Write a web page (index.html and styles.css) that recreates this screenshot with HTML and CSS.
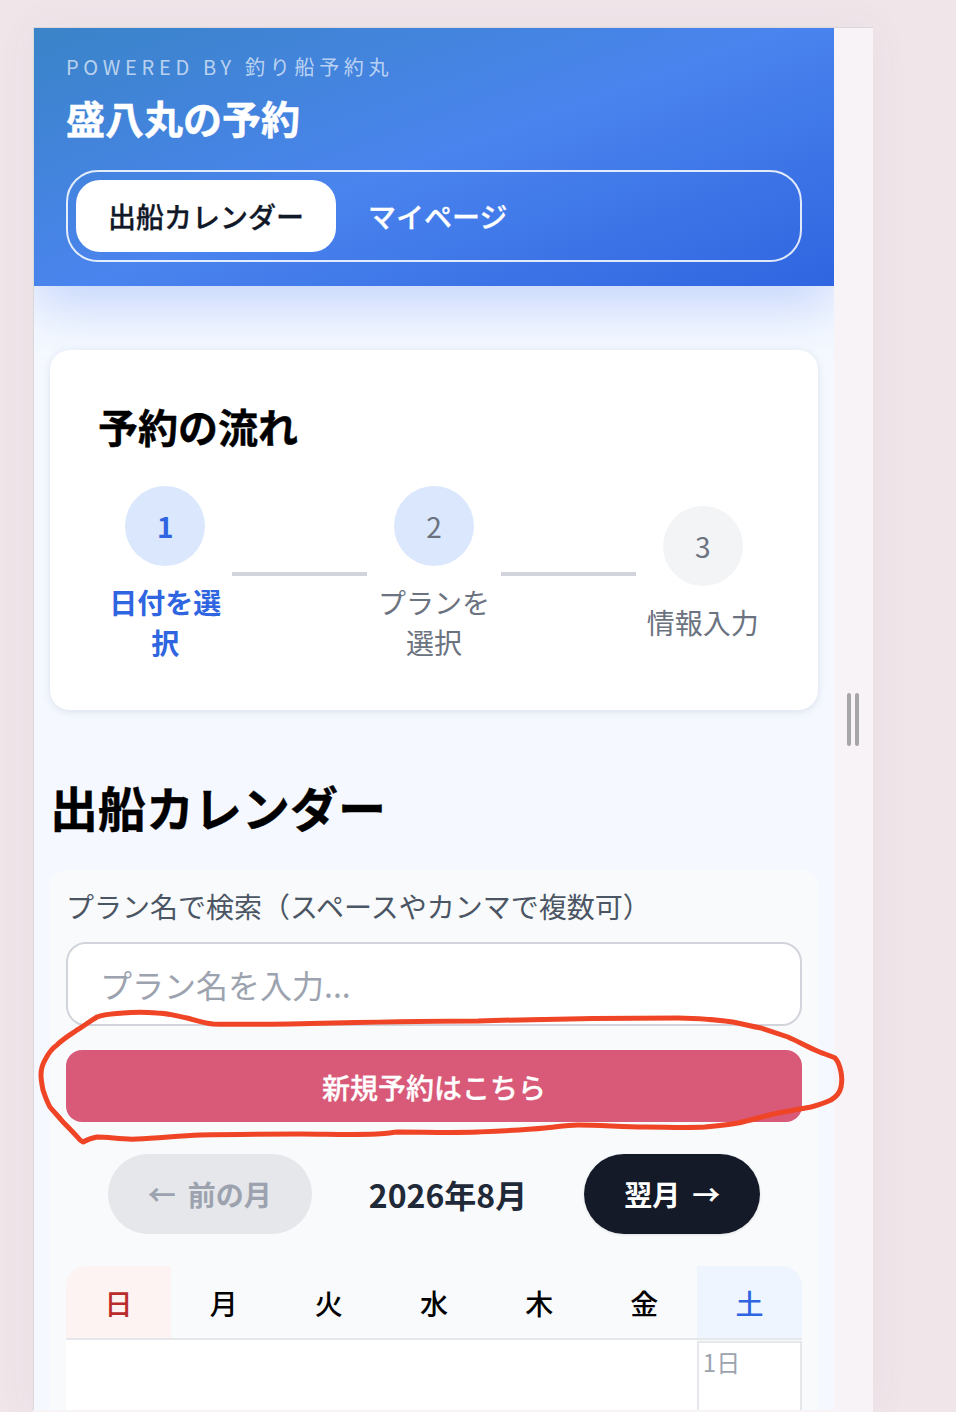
FILE: index.html
```html
<!DOCTYPE html>
<html lang="ja">
<head>
<meta charset="utf-8">
<title>盛八丸の予約</title>
<link rel="stylesheet" href="styles.css">
</head>
<body>
<div class="window">
  <div class="main">
    <header class="header">
      <p class="powered">POWERED BY 釣り船予約丸</p>
      <h1 class="title">盛八丸の予約</h1>
      <nav class="tabs">
        <a class="tab tab-active">出船カレンダー</a>
        <a class="tab">マイページ</a>
      </nav>
    </header>
    <div class="content">
      <section class="card">
        <h2 class="card-title">予約の流れ</h2>
        <div class="steps">
          <div class="step step-current"><div class="step-num">1</div><div class="step-label">日付を選択</div></div>
          <div class="step-line"></div>
          <div class="step step-mid"><div class="step-num">2</div><div class="step-label">プランを選択</div></div>
          <div class="step-line"></div>
          <div class="step step-last"><div class="step-num">3</div><div class="step-label">情報入力</div></div>
        </div>
      </section>
      <h2 class="section-title">出船カレンダー</h2>
      <section class="panel">
        <label class="search-label">プラン名で検索（スペースやカンマで複数可）</label>
        <div class="search-input">プラン名を入力...</div>
        <button class="new-btn">新規予約はこちら</button>
        <div class="month-nav">
          <button class="month-btn month-prev"><span class="arrow">←</span>前の月</button>
          <div class="month-title">2026年8月</div>
          <button class="month-btn month-next">翌月<span class="arrow arrow-next">→</span></button>
        </div>
        <div class="calendar">
          <div class="dow dow-sun">日</div>
          <div class="dow">月</div>
          <div class="dow">火</div>
          <div class="dow">水</div>
          <div class="dow">木</div>
          <div class="dow">金</div>
          <div class="dow dow-sat">土</div>
          <div class="cell-empty"></div>
          <div class="cell-empty"></div>
          <div class="cell-empty"></div>
          <div class="cell-empty"></div>
          <div class="cell-empty"></div>
          <div class="cell-empty"></div>
          <div class="cell">1日</div>
        </div>
      </section>
    </div>
  </div>
  <div class="strip"><div class="handle"></div><div class="handle"></div></div>
</div>
<svg class="scribble" viewBox="0 0 956 1412" width="956" height="1412" aria-hidden="true">
  <path d="M213 1024C203 1023 195 1020 187 1018C177 1016 167 1013 157 1013C145 1012 134 1012 123 1013C113 1014 105 1014 97 1017C90 1021 84 1026 77 1030C70 1035 63 1039 57 1045C51 1049 48 1054 45 1060C42 1065 41 1070 41 1075C41 1080 42 1085 43 1090C45 1096 47 1102 50 1107C54 1112 59 1117 63 1122C69 1128 75 1134 80 1140L83 1142C88 1139 92 1138 97 1137C110 1137 123 1140 137 1139C158 1138 179 1136 200 1135C233 1134 267 1134 300 1134C326 1134 351 1135 377 1134C384 1134 390 1133 397 1132C424 1132 451 1133 478 1132C500 1131 523 1130 545 1128C556 1127 567 1125 578 1125C600 1125 623 1127 645 1127C665 1127 685 1128 705 1127C716 1126 727 1125 738 1123C751 1120 765 1116 778 1113C789 1111 800 1109 811 1107C818 1105 825 1103 831 1100C836 1097 840 1092 841 1087C842 1082 842 1077 841 1072C840 1067 839 1062 835 1058C829 1055 821 1053 815 1050C806 1046 797 1041 788 1037C779 1034 770 1031 761 1028C749 1026 737 1022 725 1021C709 1019 694 1018 678 1018C611 1018 545 1019 478 1021C430 1021 381 1022 333 1023C293 1024 253 1025 213 1024Z"/>
</svg>
</body>
</html>
```
FILE: styles.css
```css
* { box-sizing: border-box; }
html, body { margin: 0; height: 1412px; overflow: hidden; }
body {
  position: relative;
  background: #f0e6ea;
  padding: 27px 0 0 33px;
  font-family: "Noto Sans CJK JP", "Noto Sans", sans-serif;
}
p, h1, h2 { margin: 0; }
button { font-family: inherit; border: 0; cursor: pointer; }

.window {
  display: flex;
  width: 840px;
  height: 1385px;
  background: #f7f3f7;
  border-top: 1px solid #dcd8da;
  box-shadow: 0 0 40px rgba(90, 60, 70, 0.05);
}
.main {
  width: 801px;
  height: 1382px;
  overflow: hidden;
  background: #f5f9ff;
  border-left: 1px solid #d8d8da;
}
.strip {
  width: 39px;
  height: 1385px;
  display: flex;
  justify-content: center;
  align-items: flex-start;
  gap: 4px;
  padding: 665px 1px 0 0;
}
.handle { width: 4px; height: 53px; border-radius: 2px; background: #a6a6a6; }

.header {
  position: relative;
  height: 258px;
  padding: 25px 32px 0;
  background: linear-gradient(160deg, #3a84c8 0%, #4a84ee 50%, #2f65e0 100%);
  box-shadow: 0 20px 50px rgba(59, 110, 240, 0.26);
}
.powered {
  font-size: 20px;
  line-height: 28px;
  letter-spacing: 4.7px;
  color: rgba(255, 255, 255, 0.65);
}
.title {
  font-size: 39px;
  line-height: 58px;
  margin-top: 7px;
  font-weight: 700;
  color: #fff;
  -webkit-text-stroke: 0.5px #fff;
}
.tabs {
  display: flex;
  margin-top: 24px;
  height: 92px;
  padding: 8px;
  border: 2px solid rgba(255, 255, 255, 0.85);
  border-radius: 32px;
}
.tab {
  display: flex;
  align-items: center;
  height: 72px;
  padding: 0 32px;
  border-radius: 24px;
  font-size: 28px;
  font-weight: 500;
  color: #fff;
  -webkit-text-stroke: 0.3px currentColor;
}
.tab-active { background: #fff; color: #111827; }

.content { padding: 64px 16px 0; }
.card {
  position: relative;
  height: 360px;
  padding: 48px;
  background: #fff;
  border-radius: 20px;
  box-shadow: 0 2px 8px rgba(40, 60, 110, 0.12);
}
.card-title { font-size: 40px; line-height: 56px; font-weight: 700; color: #000; -webkit-text-stroke: 0.4px #000; }
.steps { display: flex; align-items: center; margin-top: 32px; }
.step { flex: 1 1 0; min-width: 0; text-align: center; }
.step-line { flex: 1 1 0; height: 4px; background: #d1d5db; }
.step-num {
  width: 80px;
  height: 80px;
  margin: 0 auto;
  display: flex;
  align-items: center;
  justify-content: center;
  border-radius: 50%;
  font-size: 28px;
  background: #dbe7fd;
  color: #6b7280;
}
.step-current .step-num { color: #2f65e0; font-weight: 700; }
.step-last .step-num { background: #f3f4f6; }
.step-label { margin-top: 16px; font-size: 28px; line-height: 40px; color: #6b7280; }
.step-current .step-label { color: #2f65e0; font-weight: 700; }

.section-title {
  margin: 60px 0 0;
  font-size: 48px;
  line-height: 72px;
  font-weight: 700;
  color: #000;
  -webkit-text-stroke: 0.4px #000;
}
.panel {
  margin-top: 28px;
  height: 600px;
  padding: 16px;
  background: #f8fafc;
  border-radius: 16px;
}
.search-label { display: block; font-size: 28px; line-height: 40px; color: #4b5563; }
.search-input {
  margin-top: 16px;
  height: 84px;
  padding: 0 32px;
  display: flex;
  align-items: center;
  background: #fff;
  border: 2px solid #d1d5db;
  border-radius: 20px;
  font-size: 32px;
  color: #9ca3af;
}
.new-btn {
  display: block;
  width: 100%;
  height: 72px;
  margin-top: 24px;
  padding-top: 2px;
  border-radius: 16px;
  background: #d85a78;
  color: #fff;
  font-size: 28px;
  font-weight: 500;
  -webkit-text-stroke: 0.3px #fff;
}
.month-nav {
  display: flex;
  justify-content: center;
  align-items: center;
  gap: 57px;
  margin-top: 32px;
}
.month-btn {
  height: 80px;
  padding: 0 40px;
  border-radius: 40px;
  font-size: 28px;
  font-weight: 700;
  display: flex;
  align-items: center;
}
.month-prev { background: #e5e7eb; color: #9ca3af; }
.month-next { background: #141a28; color: #fff; box-shadow: 0 1px 3px rgba(0, 0, 0, 0.1); }
.arrow { margin-right: 12px; }
.arrow-next { margin: 0 0 0 12px; }
.month-title { font-size: 32px; font-weight: 700; color: #1f2937; }

.calendar {
  display: grid;
  grid-template-columns: repeat(7, 1fr);
  margin-top: 32px;
}
.dow {
  height: 74px;
  padding-top: 2px;
  display: flex;
  align-items: center;
  justify-content: center;
  font-size: 28px;
  font-weight: 500;
  color: #000;
  border-bottom: 2px solid #e5e7eb;
}
.dow-sun { background: #fdf3f2; color: #b92c2c; border-top-left-radius: 20px; }
.dow-sat { background: #eff5fe; color: #2f65e0; border-top-right-radius: 20px; }
.cell-empty { height: 120px; background: #fff; }
.cell {
  height: 120px;
  padding: 1px 4px;
  background: #fff;
  border: 2px solid #e5e7eb;
  margin-top: 1px;
  font-size: 24px;
  line-height: 36px;
  color: #9ca3af;
}

.scribble {
  position: absolute;
  left: 0;
  top: 0;
  pointer-events: none;
}
.scribble path { fill: none; stroke: #ef4526; stroke-width: 5; stroke-linejoin: round; }
```
